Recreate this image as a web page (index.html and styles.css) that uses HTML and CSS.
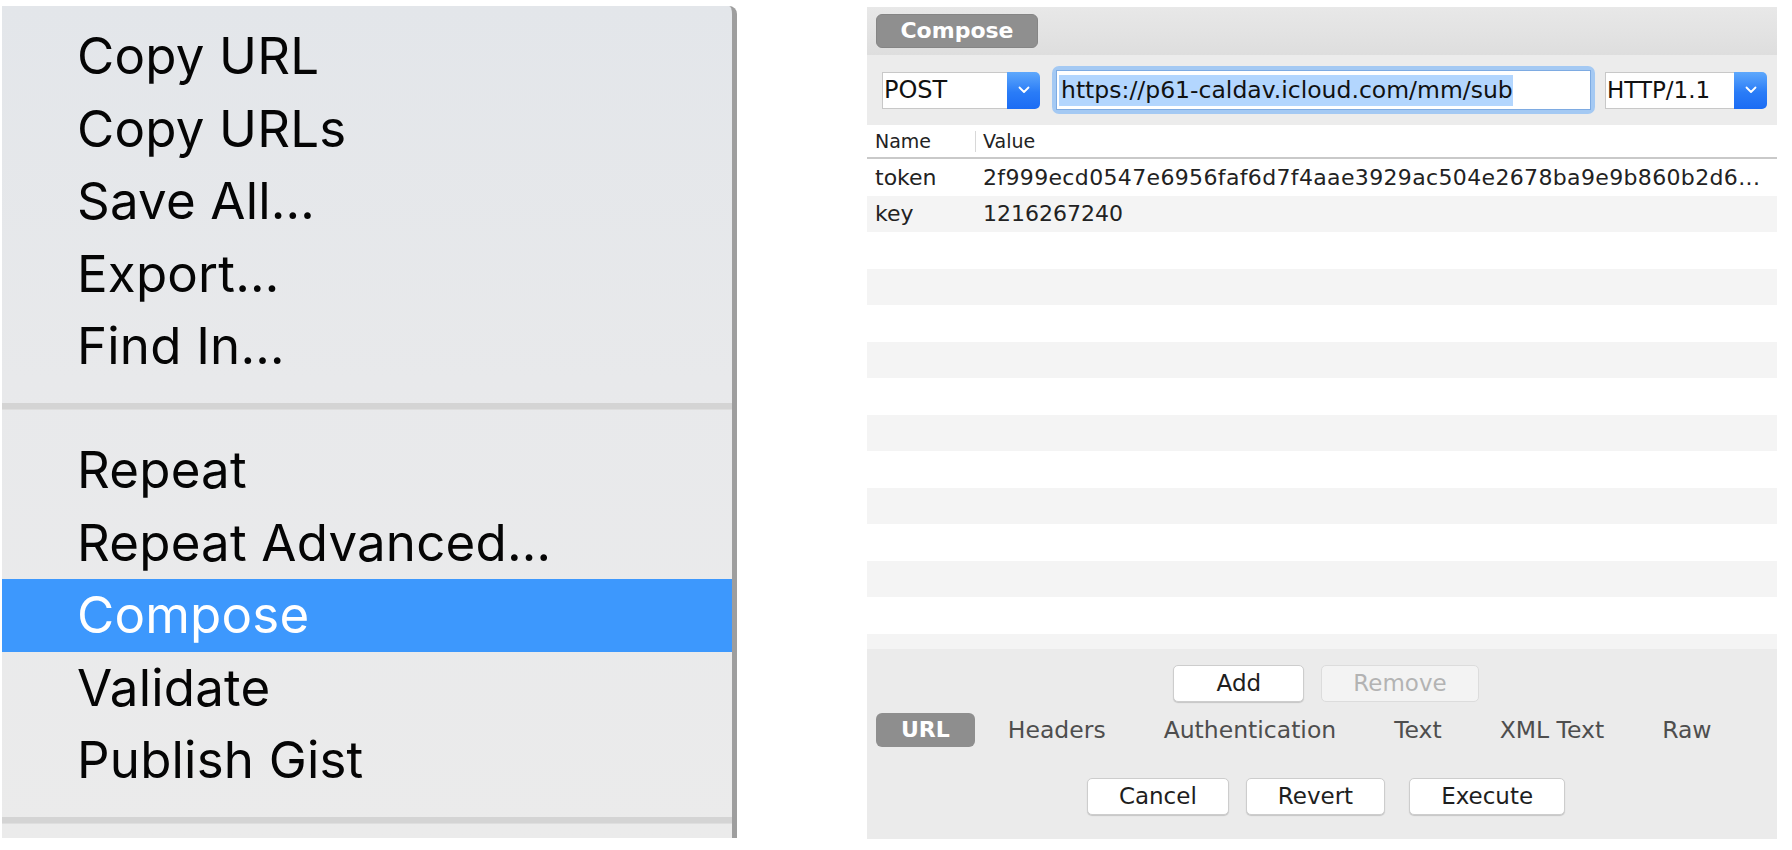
FILE: index.html
```html
<!DOCTYPE html>
<html lang="en">
<head>
<meta charset="utf-8">
<title>Compose</title>
<link rel="stylesheet" href="styles.css">
</head>
<body>
<div class="page">
  <div class="menu">
    <div class="menu-item">Copy URL</div>
    <div class="menu-item">Copy URLs</div>
    <div class="menu-item">Save All…</div>
    <div class="menu-item">Export…</div>
    <div class="menu-item">Find In…</div>
    <div class="menu-sep"></div>
    <div class="menu-item">Repeat</div>
    <div class="menu-item">Repeat Advanced…</div>
    <div class="menu-item active">Compose</div>
    <div class="menu-item">Validate</div>
    <div class="menu-item">Publish Gist</div>
    <div class="menu-sep"></div>
  </div>

  <div class="compose">
    <div class="titlebar">
      <div class="title-tab">Compose</div>
    </div>
    <div class="toolbar">
      <div class="select select-method">
        <div class="select-value">POST</div>
        <div class="select-btn"><svg width="12" height="8" viewBox="0 0 12 8"><path d="M1.5 1.5 L6 6 L10.5 1.5" fill="none" stroke="#fff" stroke-width="1.8" stroke-linecap="round" stroke-linejoin="round"/></svg></div>
      </div>
      <div class="url-ring">
        <div class="url-field"><span class="url-sel">https://p61-caldav.icloud.com/mm/sub</span></div>
      </div>
      <div class="select select-proto">
        <div class="select-value">HTTP/1.1</div>
        <div class="select-btn"><svg width="12" height="8" viewBox="0 0 12 8"><path d="M1.5 1.5 L6 6 L10.5 1.5" fill="none" stroke="#fff" stroke-width="1.8" stroke-linecap="round" stroke-linejoin="round"/></svg></div>
      </div>
    </div>
    <div class="table">
      <div class="thead">
        <div class="th th-name">Name</div>
        <div class="th th-value">Value</div>
      </div>
      <div class="tbody">
        <div class="tr"><div class="td td-name">token</div><div class="td td-value td-token">2f999ecd0547e6956faf6d7f4aae3929ac504e2678ba9e9b860b2d6...</div></div>
        <div class="tr"><div class="td td-name">key</div><div class="td td-value">1216267240</div></div>
        <div class="tr"></div>
        <div class="tr"></div>
        <div class="tr"></div>
        <div class="tr"></div>
        <div class="tr"></div>
        <div class="tr"></div>
        <div class="tr"></div>
        <div class="tr"></div>
        <div class="tr"></div>
        <div class="tr"></div>
        <div class="tr"></div>
        <div class="tr"></div>
      </div>
    </div>
    <div class="bottom">
      <div class="btn-row">
        <div class="btn">Add</div>
        <div class="btn disabled">Remove</div>
      </div>
      <div class="tabs">
        <div class="tab active">URL</div>
        <div class="tab">Headers</div>
        <div class="tab">Authentication</div>
        <div class="tab">Text</div>
        <div class="tab">XML Text</div>
        <div class="tab">Raw</div>
      </div>
      <div class="btn-row btn-row-actions">
        <div class="btn">Cancel</div>
        <div class="btn">Revert</div>
        <div class="btn btn-default">Execute</div>
      </div>
    </div>
  </div>
</div>
</body>
</html>
```

FILE: styles.css
```css
html, body {
  margin: 0;
  padding: 0;
  background: #ffffff;
}

.page {
  width: 1792px;
  height: 850px;
  box-sizing: border-box;
  padding: 6px 0 0 2px;
  display: flex;
  align-items: flex-start;
  gap: 130px;
}

/* ---------- left context menu ---------- */
.menu {
  width: 735px;
  height: 832px;
  box-sizing: border-box;
  padding-top: 14px;
  background: linear-gradient(180deg, #e3e6ea 0%, #e8e9eb 45%, #ebebeb 100%);
  border-right: 5px solid #9e9e9e;
  border-top-right-radius: 8px;
  font-family: Inter, "Liberation Sans", sans-serif;
  font-size: 51px;
  color: #050505;
}

.menu-item {
  height: 72.5px;
  line-height: 72.5px;
  padding-left: 75px;
  white-space: nowrap;
  letter-spacing: 0.2px;
}

.menu-item.active {
  background: #3d98fd;
  color: #ffffff;
}

.menu-sep {
  height: 7px;
  margin: 20.5px 0 24px;
  background: #d4d4d4;
  border-bottom: 1px solid #dedede;
  box-sizing: border-box;
}

/* ---------- compose window ---------- */
.compose {
  width: 910px;
  height: 832px;
  margin-top: 1px;
  display: flex;
  flex-direction: column;
  font-family: "DejaVu Sans", "Liberation Sans", sans-serif;
  color: #1e1e1e;
}

.titlebar {
  height: 48px;
  box-sizing: border-box;
  padding: 7px 9px;
  background: linear-gradient(180deg, #e8e8e8, #dedede);
}

.title-tab {
  width: 162px;
  height: 34px;
  box-sizing: border-box;
  border: 1px solid #858585;
  border-radius: 6px;
  background: #8f8f8f;
  color: #ffffff;
  font-weight: bold;
  font-size: 22px;
  line-height: 32px;
  text-align: center;
}

.toolbar {
  height: 70px;
  box-sizing: border-box;
  padding-left: 15px;
  background: #ececec;
  display: flex;
  align-items: center;
}

.select {
  height: 37px;
  display: flex;
}

.select-method { width: 158px; }
.select-proto { width: 162px; margin-left: 10px; }

.select-value {
  flex: 1;
  background: #ffffff;
  border: 1px solid #c8c8c8;
  border-right: none;
  font-size: 24px;
  line-height: 35px;
  padding-left: 1px;
  color: #111;
}

.select-proto .select-value { font-size: 23px; }

.select-btn {
  width: 33px;
  border-radius: 0 5px 5px 0;
  background: linear-gradient(180deg, #5ea8fc 0%, #2a7cf7 55%, #1b6cf4 100%);
  display: flex;
  align-items: center;
  justify-content: center;
}

.url-ring {
  width: 543px;
  height: 48px;
  box-sizing: border-box;
  margin-left: 12px;
  padding: 4px;
  border-radius: 7px;
  background: #a4c9f3;
}

.url-field {
  height: 100%;
  box-sizing: border-box;
  background: #ffffff;
  border: 1px solid #7eabe2;
  padding-left: 2px;
  display: flex;
  align-items: center;
}

.url-sel {
  background: #b3d6fe;
  font-size: 23.5px;
  line-height: 31px;
  padding-left: 2px;
  color: #111;
  white-space: nowrap;
}

/* ---------- table ---------- */
.table {
  flex: 1;
  display: flex;
  flex-direction: column;
  background: #ffffff;
  overflow: hidden;
}

.thead {
  height: 32px;
  box-sizing: content-box;
  display: flex;
  align-items: center;
  border-bottom: 2px solid #c9c9c9;
  font-size: 19px;
  color: #222;
}

.th-name {
  width: 100px;
  padding-left: 8px;
}

.th-value {
  height: 21px;
  line-height: 21px;
  padding-left: 7px;
  border-left: 1px solid #d8d8d8;
}

.tbody {
  flex: 1;
  overflow: hidden;
}

.tr {
  height: 36.5px;
  display: flex;
  align-items: center;
  font-size: 22px;
  color: #222;
  white-space: nowrap;
}

.tr:nth-child(even) {
  background: #f4f4f4;
}

.td-name {
  width: 100px;
  padding-left: 8px;
}

.td-value {
  padding-left: 8px;
}

.td-token {
  letter-spacing: 0.35px;
}

/* ---------- bottom area ---------- */
.bottom {
  height: 190px;
  box-sizing: border-box;
  padding-top: 16px;
  background: #ebebeb;
}

.btn-row {
  display: flex;
  justify-content: center;
  gap: 17px;
  padding-left: 8px;
}

.btn-row-actions {
  margin-top: 31px;
}

.btn {
  min-width: 131px;
  height: 37px;
  box-sizing: border-box;
  padding: 0 31px;
  background: #ffffff;
  border: 1px solid #cdcdcd;
  border-radius: 5px;
  box-shadow: 0 1px 1px rgba(0, 0, 0, 0.16);
  font-size: 23px;
  line-height: 35px;
  text-align: center;
  color: #1e1e1e;
}

.btn.disabled {
  background: #f3f3f3;
  border-color: #dcdcdc;
  box-shadow: none;
  color: #b3b3b3;
}

.btn-default {
  margin-left: 7px;
}

.tabs {
  margin-top: 11px;
  height: 34px;
  padding-left: 9px;
  display: flex;
  gap: 8px;
}

.tab {
  padding: 0 25px;
  line-height: 34px;
  font-size: 23.5px;
  color: #4e4e4e;
  white-space: nowrap;
}

.tab.active {
  background: #8e8e8e;
  border-radius: 6px;
  color: #ffffff;
  font-weight: bold;
  font-size: 22px;
}
```
